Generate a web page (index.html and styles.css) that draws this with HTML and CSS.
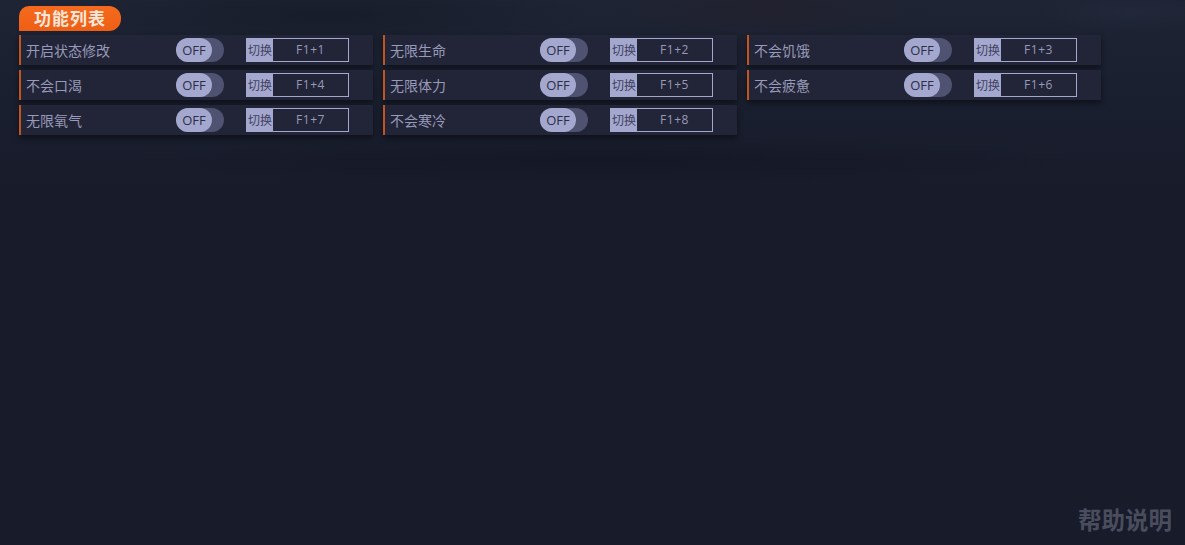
FILE: index.html
```html
<!DOCTYPE html>
<html lang="zh-CN">
<head>
    <meta charset="UTF-8">
    <title>功能列表</title>
    <link rel="stylesheet" href="styles.css">
</head>
<body>

<div class="page">
    <div class="title">功能列表</div>

    <div class="list">
        <div class="item">
            <span class="name">开启状态修改</span>
            <div class="toggle"><span class="knob">OFF</span></div>
            <div class="hotkey"><span class="hotkey-label">切换</span><span class="hotkey-value">F1+1</span></div>
        </div>
        <div class="item">
            <span class="name">无限生命</span>
            <div class="toggle"><span class="knob">OFF</span></div>
            <div class="hotkey"><span class="hotkey-label">切换</span><span class="hotkey-value">F1+2</span></div>
        </div>
        <div class="item">
            <span class="name">不会饥饿</span>
            <div class="toggle"><span class="knob">OFF</span></div>
            <div class="hotkey"><span class="hotkey-label">切换</span><span class="hotkey-value">F1+3</span></div>
        </div>
        <div class="item">
            <span class="name">不会口渴</span>
            <div class="toggle"><span class="knob">OFF</span></div>
            <div class="hotkey"><span class="hotkey-label">切换</span><span class="hotkey-value">F1+4</span></div>
        </div>
        <div class="item">
            <span class="name">无限体力</span>
            <div class="toggle"><span class="knob">OFF</span></div>
            <div class="hotkey"><span class="hotkey-label">切换</span><span class="hotkey-value">F1+5</span></div>
        </div>
        <div class="item">
            <span class="name">不会疲惫</span>
            <div class="toggle"><span class="knob">OFF</span></div>
            <div class="hotkey"><span class="hotkey-label">切换</span><span class="hotkey-value">F1+6</span></div>
        </div>
        <div class="item">
            <span class="name">无限氧气</span>
            <div class="toggle"><span class="knob">OFF</span></div>
            <div class="hotkey"><span class="hotkey-label">切换</span><span class="hotkey-value">F1+7</span></div>
        </div>
        <div class="item">
            <span class="name">不会寒冷</span>
            <div class="toggle"><span class="knob">OFF</span></div>
            <div class="hotkey"><span class="hotkey-label">切换</span><span class="hotkey-value">F1+8</span></div>
        </div>
    </div>

    <div class="help">帮助说明</div>
</div>

</body>
</html>
```

FILE: styles.css
```css
html, body {
    margin: 0;
    padding: 0;
    height: 100%;
    overflow: hidden;
}
body {
    background-color: #171b2a;
    background-image:
        radial-gradient(ellipse 260px 40px at 330px 14px, rgba(16, 19, 30, 0.4), transparent),
        radial-gradient(ellipse 170px 30px at 770px 10px, rgba(38, 30, 40, 0.45), transparent),
        radial-gradient(ellipse 90px 20px at 1130px 12px, rgba(36, 44, 62, 0.5), transparent),
        radial-gradient(ellipse 480px 24px at 600px 160px, rgba(11, 14, 24, 0.3), transparent),
        linear-gradient(to bottom, #1e2434 0, #1a1f2f 100px, #171b2a 190px, #171b2a 100%);
    font-family: "Microsoft YaHei", "Noto Sans CJK SC", "Liberation Sans", sans-serif;
    color: #a4a8cb;
}
.page {
    box-sizing: border-box;
    height: 545px;
    padding: 6px 13px 10px 19px;
    display: flex;
    flex-direction: column;
}
.title {
    width: 102px;
    height: 25px;
    line-height: 24px;
    text-align: center;
    font-size: 17px;
    font-weight: bold;
    letter-spacing: 1px;
    color: #f7e6dc;
    background: linear-gradient(to bottom, #f56a1e, #ee5f14);
    border-radius: 10px 12px 12px 0;
}
.list {
    display: grid;
    grid-template-columns: repeat(3, 354px);
    grid-auto-rows: 30px;
    column-gap: 10px;
    row-gap: 5px;
    margin-top: 4px;
}
.item {
    display: flex;
    align-items: center;
    box-sizing: border-box;
    padding-left: 5px;
    background-color: #222437;
    border-left: 2px solid #c2551f;
    box-shadow: 0 3px 6px rgba(0, 0, 0, 0.45);
}
.name {
    width: 150px;
    font-size: 14px;
    color: #979ab8;
    white-space: nowrap;
}
.toggle {
    width: 48px;
    height: 24px;
    border-radius: 12px;
    background-color: #4f5270;
}
.knob {
    display: block;
    width: 36px;
    height: 24px;
    line-height: 25px;
    text-align: center;
    font-family: "Open Sans", "Liberation Sans", sans-serif;
    font-size: 13px;
    color: #2c2e46;
    background-color: #a4a8cf;
    border-radius: 12px;
}
.hotkey {
    display: flex;
    box-sizing: border-box;
    width: 103px;
    height: 24px;
    margin-left: 22px;
    border: 1px solid #a4a8cf;
}
.hotkey-label {
    width: 26px;
    flex-shrink: 0;
    line-height: 21px;
    text-align: center;
    font-size: 12px;
    color: #3f4160;
    background-color: #a4a8cf;
    white-space: nowrap;
}
.hotkey-value {
    flex: 1;
    line-height: 22px;
    text-align: center;
    font-family: "Open Sans", "Liberation Sans", sans-serif;
    font-size: 12px;
    letter-spacing: 0.5px;
    color: #979ab8;
}
.help {
    margin-top: auto;
    align-self: flex-end;
    font-size: 23.5px;
    line-height: 32px;
    font-weight: bold;
    color: #4a4d5d;
}
```
